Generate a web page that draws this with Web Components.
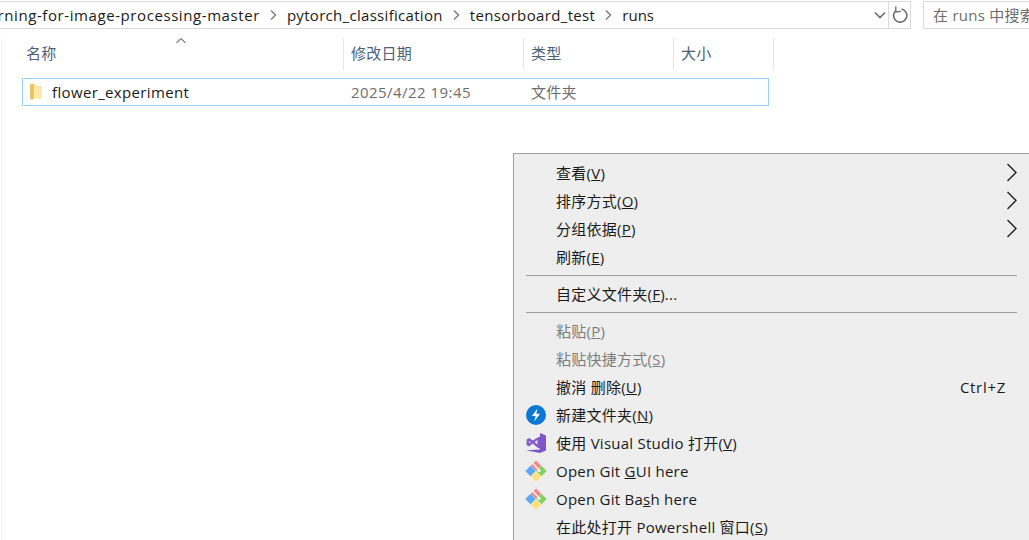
<!DOCTYPE html>
<html lang="zh">
<head>
<meta charset="utf-8">
<title>runs</title>
<style>
html, body { margin: 0; height: 540px; overflow: hidden; background: #fff; }
body { font: 15px/20px "Open Sans", "Noto Sans CJK SC", sans-serif; letter-spacing: .25px; color: #1a1a1a; }
</style>
</head>
<body>
<explorer-window>
  <address-bar slot="top">
    <path-crumb style="letter-spacing:.58px">deep-learning-for-image-processing-master</path-crumb>
    <path-crumb style="letter-spacing:.3px">pytorch_classification</path-crumb>
    <path-crumb>tensorboard_test</path-crumb>
    <path-crumb last style="letter-spacing:0">runs</path-crumb>
  </address-bar>
  <search-box slot="top">在 runs 中搜索</search-box>
  <list-header slot="list"></list-header>
  <file-row slot="list" name="flower_experiment" date="2025/4/22 19:45" type="文件夹"></file-row>
  <context-menu slot="menu">
    <menu-item arrow>查看(<u>V</u>)</menu-item>
    <menu-item arrow>排序方式(<u>O</u>)</menu-item>
    <menu-item arrow>分组依据(<u>P</u>)</menu-item>
    <menu-item>刷新(<u>E</u>)</menu-item>
    <menu-sep></menu-sep>
    <menu-item>自定义文件夹(<u>F</u>)...</menu-item>
    <menu-sep></menu-sep>
    <menu-item disabled>粘贴(<u>P</u>)</menu-item>
    <menu-item disabled>粘贴快捷方式(<u>S</u>)</menu-item>
    <menu-item shortcut="Ctrl+Z">撤消 删除(<u>U</u>)</menu-item>
    <menu-item>
      <svg slot="icon" width="22" height="22" viewBox="0 0 22 22"><circle cx="11" cy="11" r="10" fill="#0b78d6"/><path d="M12.5 4.5 7 12h3.6L9.2 17.5 15 9.8h-3.7z" fill="#fff"/></svg>
      新建文件夹(<u>N</u>)
    </menu-item>
    <menu-item>
      <svg slot="icon" width="22" height="22" viewBox="0 0 22 22"><path d="M15 1 21 3.4V18.6L15 21 1 18.2 15 17.4z" fill="#7f57c4"/><path d="M12.4 5.8 15 4.6V16.8L12.4 15.6 7.6 11.4 4.2 14.4 1.6 13V7.4L4.2 6 7.6 8.6zM4 8.8V11.6L5.6 10.2zM12.4 8 9.6 10.2 12.4 12.6z" fill="#8459cb"/></svg>
      使用 Visual Studio 打开(<u>V</u>)
    </menu-item>
    <menu-item><git-icon slot="icon"></git-icon>Open Git <u>G</u>UI here</menu-item>
    <menu-item><git-icon slot="icon"></git-icon>Open Git Ba<u>s</u>h here</menu-item>
    <menu-item>在此处打开 Powershell 窗口(<u>S</u>)</menu-item>
  </context-menu>
</explorer-window>

<script>
function shadow(el, html) {
  el.attachShadow({mode: "open"}).innerHTML = html;
}

class ExplorerWindow extends HTMLElement {
  connectedCallback() {
    shadow(this, `<style>
      :host { display: block; position: relative; width: 1029px; height: 540px; overflow: hidden; }
      .top { display: flex; gap: 12px; padding-top: 1px; height: 28px; }
      .list { margin: 9px 0 0 1px; height: 502px; border-left: 1px solid #f2f2f2; }
    </style>
    <div class="top"><slot name="top"></slot></div>
    <div class="list"><slot name="list"></slot></div>
    <slot name="menu"></slot>`);
  }
}

class AddressBar extends HTMLElement {
  connectedCallback() {
    shadow(this, `<style>
      :host { display: flex; width: 911px; height: 28px; box-sizing: border-box; flex: none;
        border: solid #d9d9d9; border-width: 1px 1px 1px 0; letter-spacing: .35px; }
      .path { flex: 1; min-width: 0; display: flex; justify-content: flex-end; overflow: hidden;
        padding-right: 213px; align-items: center; white-space: nowrap; }
      .drop { width: 21px; display: flex; align-items: center; justify-content: center; padding-left: 4px; box-sizing: border-box; }
      .refresh { width: 21px; border-left: 1px solid #d9d9d9; display: flex; align-items: center; justify-content: center; }
    </style>
    <div class="path"><slot></slot></div>
    <div class="drop"><svg width="12" height="8" viewBox="0 0 12 8"><path d="M1 1.5 6 6.5 11 1.5" fill="none" stroke="#6d6d6d" stroke-width="1.6"/></svg></div>
    <div class="refresh"><svg width="16" height="18" viewBox="0 0 16 18"><path d="M9.5 3A6.6 6.6 0 1 1 3.4 5" fill="none" stroke="#6d6d6d" stroke-width="1.6"/><path d="M3.8 .6 3.8 6 9 5.4" fill="none" stroke="#6d6d6d" stroke-width="1.4"/></svg></div>`);
  }
}

class PathCrumb extends HTMLElement {
  connectedCallback() {
    const sep = this.hasAttribute("last") ? "" :
      `<svg width="27" height="12" viewBox="0 0 27 12"><path d="M11 1.5 15.5 6 11 10.5" fill="none" stroke="#808080" stroke-width="1.5"/></svg>`;
    shadow(this, `<style>
      :host { display: inline-flex; align-items: center; flex: none; color: #1a1a1a; }
    </style><slot></slot>${sep}`);
  }
}

class SearchBox extends HTMLElement {
  connectedCallback() {
    shadow(this, `<style>
      :host { display: flex; align-items: center; flex: 1; height: 28px; box-sizing: border-box; min-width: 0;
        border: solid #d9d9d9; border-width: 1px 0 1px 1px; padding-left: 9px; color: #6d6d6d;
        white-space: nowrap; overflow: hidden; }
    </style><slot></slot>`);
  }
}

class ListHeader extends HTMLElement {
  connectedCallback() {
    const cols = [["名称", 325], ["修改日期", 180], ["类型", 150], ["大小", 100]];
    shadow(this, `<style>
      :host { display: flex; height: 32px; padding-left: 17px; position: relative; color: #4c607a; }
      .col { box-sizing: border-box; border-right: 1px solid #e5e5e5; padding: 0 0 2px 7px; display: flex; align-items: center; }
      .col:first-child { padding-left: 5px; }
      svg { position: absolute; left: 172px; top: -1px; }
    </style>
    ${cols.map(c => `<div class="col" style="width:${c[1]}px">${c[0]}</div>`).join("")}
    <svg width="14" height="8" viewBox="0 0 14 8"><path d="M2.5 6 7 1.5 11.5 6" fill="none" stroke="#808080" stroke-width="1.1"/></svg>`);
  }
}

class FileRow extends HTMLElement {
  connectedCallback() {
    shadow(this, `<style>
      :host { display: flex; align-items: center; box-sizing: border-box; width: 747px; height: 28px;
        margin: 8px 0 0 20px; border: 1px solid #99d1ff; color: #6d6d6d; }
      svg { margin-left: 6px; flex: none; }
      .name { width: 299px; margin-left: 9px; color: #1a1a1a; flex: none; letter-spacing: .35px; }
      .date { width: 180px; flex: none; letter-spacing: .45px; }
    </style>
    <svg width="14" height="18" viewBox="0 0 14 18"><path d="M1 1H6L7 3H13V15.5H3V17L1 15.5z" fill="#fbe08c"/><path d="M1 1H5V15.5L3 17 1 15.5z" fill="#e9c565"/><path d="M5 3.5H13V15.5H5z" fill="#fdeaa8"/></svg>
    <div class="name">${this.getAttribute("name")}</div>
    <div class="date">${this.getAttribute("date")}</div>
    <div>${this.getAttribute("type")}</div>`);
  }
}

class ContextMenu extends HTMLElement {
  connectedCallback() {
    shadow(this, `<style>
      :host { display: block; position: absolute; left: 513px; top: 153px; right: 0; box-sizing: border-box;
        background: #eeeeee; border: solid #a0a0a0; border-width: 1px 0 0 1px; padding-top: 5px; }
    </style><slot></slot>`);
  }
}

class MenuItem extends HTMLElement {
  connectedCallback() {
    const arrow = this.hasAttribute("arrow") ?
      `<svg class="arrow" width="12" height="19" viewBox="0 0 12 19"><path d="M1.5 1 10 9.5 1.5 18" fill="none" stroke="#222" stroke-width="1.4"/></svg>` : "";
    const key = this.getAttribute("shortcut");
    shadow(this, `<style>
      :host { display: flex; align-items: center; position: relative; height: 28px; padding-left: 42px; white-space: nowrap; color: #1a1a1a; }
      :host([disabled]) { color: #7d7d7d; }
      .icon { position: absolute; left: 11px; top: 3px; width: 22px; height: 22px; }
      .key { position: absolute; right: 23px; letter-spacing: .7px; }
      .arrow { position: absolute; right: 11px; top: 4px; }
    </style>
    <div class="icon"><slot name="icon"></slot></div>
    <span><slot></slot></span>
    ${key ? `<span class="key">${key}</span>` : ""}${arrow}`);
  }
}

class MenuSep extends HTMLElement {
  connectedCallback() {
    shadow(this, `<style>
      :host { display: block; height: 9px; padding: 4px 12px 0; box-sizing: border-box; }
      div { height: 1px; background: #a0a0a0; }
    </style><div></div>`);
  }
}

class GitIcon extends HTMLElement {
  connectedCallback() {
    shadow(this, `<style>:host { display: block; width: 22px; height: 22px; }</style>
    <svg width="22" height="22" viewBox="0 0 22 22">
      <path d="M11 .5 16.2 5.7 11 10.9 5.8 5.7z" fill="#f08a8a"/>
      <path d="M5.5 5.8 10.7 11 5.5 16.2 .3 11z" fill="#5aa9f5"/>
      <path d="M16.5 5.8 21.7 11 16.5 16.2 11.3 11z" fill="#84d060"/>
      <path d="M11 11.3 16.2 16.5 11 21.7 5.8 16.5z" fill="#fde27a"/>
      <path d="M8 3.5 14 10" stroke="#fff" stroke-width="1.2"/>
      <circle cx="14" cy="10.5" r="1.5" fill="#fff"/>
    </svg>`);
  }
}

customElements.define("explorer-window", ExplorerWindow);
customElements.define("address-bar", AddressBar);
customElements.define("path-crumb", PathCrumb);
customElements.define("search-box", SearchBox);
customElements.define("list-header", ListHeader);
customElements.define("file-row", FileRow);
customElements.define("context-menu", ContextMenu);
customElements.define("menu-item", MenuItem);
customElements.define("menu-sep", MenuSep);
customElements.define("git-icon", GitIcon);
</script>
</body>
</html>
